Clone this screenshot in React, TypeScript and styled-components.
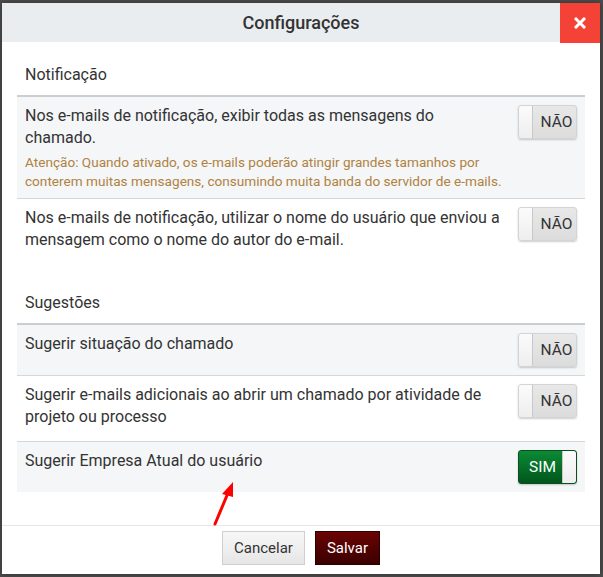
import React from "react";
import styled, { createGlobalStyle } from "styled-components";

const Global = createGlobalStyle`
  html, body { margin: 0; padding: 0; }
  body {
    background: #4d4d4d;
    font-family: Roboto, "Liberation Sans", Arial, sans-serif;
    color: #333;
  }
`;

const Page = styled.div`
  width: 603px;
  height: 577px;
  padding: 3px 0 0 2px;
  box-sizing: border-box;
  position: relative;
  overflow: hidden;
`;

const Modal = styled.div`
  width: 598px;
  height: 571px;
  background: #fff;
  display: flex;
  flex-direction: column;
  box-shadow: 0 0 6px rgba(0, 0, 0, 0.4);
`;

const Header = styled.div`
  height: 40px;
  background: #e9edf0;
  display: flex;
  align-items: center;
  position: relative;
`;

const Title = styled.h4`
  flex: 1;
  margin: 0;
  text-align: center;
  font-size: 18px;
  font-weight: 500;
  color: #333;
`;

const Close = styled.button`
  position: absolute;
  right: 0;
  top: 0;
  width: 40px;
  height: 40px;
  border: 0;
  background: #f44336;
  color: #fff;
  display: flex;
  align-items: center;
  justify-content: center;
  padding: 0;
`;

const Body = styled.div`
  flex: 1;
  padding: 22px 15px 0 15px;
`;

const Section = styled.div`
  margin-bottom: 33px;
`;

const SectionTitle = styled.div`
  font-size: 16px;
  line-height: 22px;
  padding: 0 8px;
  margin-bottom: 9px;
`;

const Rows = styled.div`
  border-top: 2px solid #c9ced3;
`;

const Row = styled.div<{ $shaded?: boolean; $last?: boolean }>`
  display: flex;
  align-items: flex-start;
  gap: 14px;
  padding: 8px;
  background: ${(p) => (p.$shaded ? "#f4f6f8" : "#fff")};
  border-bottom: ${(p) => (p.$last ? "0" : "1px solid #d3d8dc")};
`;

const Label = styled.div`
  flex: 1;
  min-width: 0;
`;

const Text = styled.div<{ $pb?: number }>`
  font-size: 16px;
  line-height: 22px;
  color: #333;
  padding-bottom: ${(p) => p.$pb ?? 0}px;
`;

const Warning = styled.div`
  font-size: 13.6px;
  line-height: 18.5px;
  color: #b0823f;
  margin-top: 4px;
`;

const Switch = styled.div<{ $on?: boolean }>`
  flex: none;
  width: 59px;
  height: 34px;
  box-sizing: border-box;
  border-radius: 3px;
  display: flex;
  align-items: stretch;
  overflow: hidden;
  border: 1px solid ${(p) => (p.$on ? "#0b4f1e" : "#d4d4d4")};
  background: ${(p) =>
    p.$on
      ? "linear-gradient(#0c8a35, #00561b)"
      : "linear-gradient(#e8e8e8, #dcdcdc)"};
  box-shadow: 0 1px 2px rgba(0, 0, 0, 0.2);
  flex-direction: ${(p) => (p.$on ? "row" : "row-reverse")};
`;

const SwitchText = styled.span<{ $on?: boolean }>`
  flex: 1;
  display: flex;
  align-items: center;
  justify-content: center;
  font-size: 15.5px;
  color: ${(p) => (p.$on ? "#fff" : "#333")};
  padding-left: 4px;
`;

const Knob = styled.span<{ $on?: boolean }>`
  width: 13px;
  background: linear-gradient(#fbfbfb, #eeeeee);
  border-${(p) => (p.$on ? "left" : "right")}: 1px solid #c8c8c8;
  border-radius: ${(p) => (p.$on ? "0 2px 2px 0" : "2px 0 0 2px")};
`;

const Footer = styled.div`
  border-top: 1px solid #e7e7e7;
  height: 44px;
  display: flex;
  justify-content: center;
  align-items: flex-start;
  gap: 10px;
  padding-top: 5px;
`;

const Button = styled.button<{ $primary?: boolean }>`
  height: 34px;
  padding: 0 11px;
  font-family: inherit;
  font-size: 15px;
  border-radius: 0;
  border: 1px solid ${(p) => (p.$primary ? "#2a0000" : "#cfcfcf")};
  color: ${(p) => (p.$primary ? "#fff" : "#333")};
  background: ${(p) =>
    p.$primary
      ? "linear-gradient(#6a0303, #3b0000)"
      : "linear-gradient(#f7f7f7, #e6e6e6)"};
`;

const Arrow = styled.svg`
  position: absolute;
  left: 205px;
  top: 476px;
`;

type Item = { text: string; warning?: string; on?: boolean; pb?: number };

const Toggle = ({ on }: { on?: boolean }) => (
  <Switch $on={on}>
    <SwitchText $on={on}>{on ? "SIM" : "NÃO"}</SwitchText>
    <Knob $on={on} />
  </Switch>
);

const Group = ({ title, items }: { title: string; items: Item[] }) => (
  <Section>
    <SectionTitle>{title}</SectionTitle>
    <Rows>
      {items.map((it, i) => (
        <Row key={i} $shaded={i % 2 === 0} $last={i === items.length - 1}>
          <Label>
            <Text $pb={it.pb}>{it.text}</Text>
            {it.warning && <Warning>{it.warning}</Warning>}
          </Label>
          <Toggle on={it.on} />
        </Row>
      ))}
    </Rows>
  </Section>
);

export default function App() {
  return (
    <>
      <Global />
      <Page>
        <Modal>
          <Header>
            <Title>Configurações</Title>
            <Close aria-label="Fechar">
              <svg width="12" height="12" viewBox="0 0 12 12">
                <path d="M2 2 L10 10 M10 2 L2 10" stroke="#fff" strokeWidth="3" strokeLinecap="square" />
              </svg>
            </Close>
          </Header>
          <Body>
            <Group
              title="Notificação"
              items={[
                {
                  text: "Nos e-mails de notificação, exibir todas as mensagens do chamado.",
                  warning:
                    "Atenção: Quando ativado, os e-mails poderão atingir grandes tamanhos por conterem muitas mensagens, consumindo muita banda do servidor de e-mails.",
                },
                {
                  text: "Nos e-mails de notificação, utilizar o nome do usuário que enviou a mensagem como o nome do autor do e-mail.",
                },
              ]}
            />
            <Group
              title="Sugestões"
              items={[
                { text: "Sugerir situação do chamado" },
                {
                  text: "Sugerir e-mails adicionais ao abrir um chamado por atividade de projeto ou processo",
                  pb: 5,
                },
                { text: "Sugerir Empresa Atual do usuário", on: true },
              ]}
            />
          </Body>
          <Footer>
            <Button>Cancelar</Button>
            <Button $primary>Salvar</Button>
          </Footer>
        </Modal>
        <Arrow width="40" height="54" viewBox="0 0 40 54">
          <path d="M10 48 L23 17" stroke="#f00" strokeWidth="3" strokeLinecap="round" />
          <path d="M28 6 L17 18 L28 21 Z" fill="#f00" />
        </Arrow>
      </Page>
    </>
  );
}
